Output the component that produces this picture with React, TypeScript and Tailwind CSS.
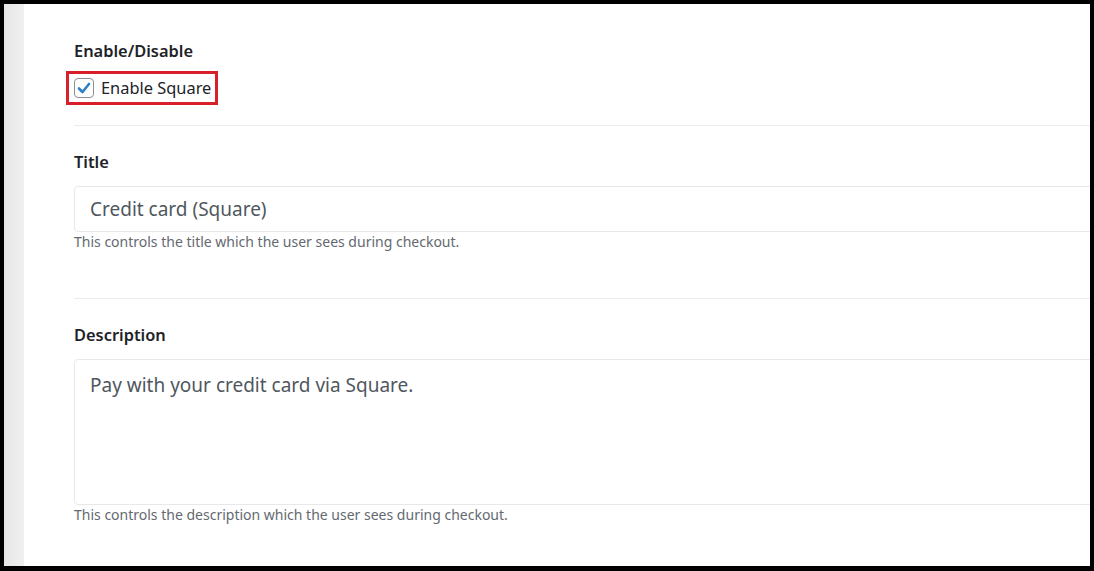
import React from "react";

const font = { fontFamily: '"Noto Sans", "Open Sans", sans-serif' };

export default function App() {
  return (
    <div className="w-[1094px] h-[571px] bg-black pt-[4px] pl-[4px] pr-[4px] pb-[5px] overflow-hidden" style={font}>
      <div className="flex h-full w-full bg-white">
        <div className="w-[20px] h-full bg-gradient-to-r from-[#e6e6e6] to-[#f0f0f0] shrink-0" />
        <div className="flex-1 overflow-hidden pl-[50px]">
          <div className="w-[1100px]">
            <div className="mt-[35px] text-[16.4px] leading-[24px] font-semibold text-[#1d2327]">Enable/Disable</div>
            <div className="mt-[8px] ml-[-8px] inline-flex items-center h-[34px] border-[3px] border-[#d8202a] pl-[5px] pr-[4px]">
              <span className="w-[20px] h-[20px] rounded-[4px] border border-[#8c8f94] bg-white flex items-center justify-center">
                <svg width="16" height="16" viewBox="0 0 16 16">
                  <path d="M3 8.5 L6.5 12 L13 4" fill="none" stroke="#2d7fc8" strokeWidth="2.6" strokeLinecap="round" strokeLinejoin="round" />
                </svg>
              </span>
              <span className="ml-[7px] text-[16.4px] leading-[24px] text-[#1d2327]">Enable Square</span>
            </div>
            <div className="block">
              <div className="mt-[20px] h-px bg-[#ededed]" />
            </div>
            <div className="mt-[24px] text-[16.4px] leading-[24px] font-semibold text-[#1d2327]">Title</div>
            <div className="mt-[12px] h-[46px] border border-[#e8e8e8] rounded-[4px] flex items-center pl-[15px] text-[19px] text-[#50575e]">
              Credit card (Square)
            </div>
            <div className="text-[14px] leading-[20px] text-[#646970]">This controls the title which the user sees during checkout.</div>
            <div className="mt-[46px] h-px bg-[#ededed]" />
            <div className="mt-[24px] text-[16.4px] leading-[24px] font-semibold text-[#1d2327]">Description</div>
            <div className="mt-[12px] h-[146px] border border-[#e8e8e8] rounded-[4px] pl-[15px] pt-[12px] text-[19px] leading-[26px] text-[#50575e]">
              Pay with your credit card via Square.
            </div>
            <div className="text-[14px] leading-[20px] text-[#646970]">This controls the description which the user sees during checkout.</div>
          </div>
        </div>
      </div>
    </div>
  );
}
